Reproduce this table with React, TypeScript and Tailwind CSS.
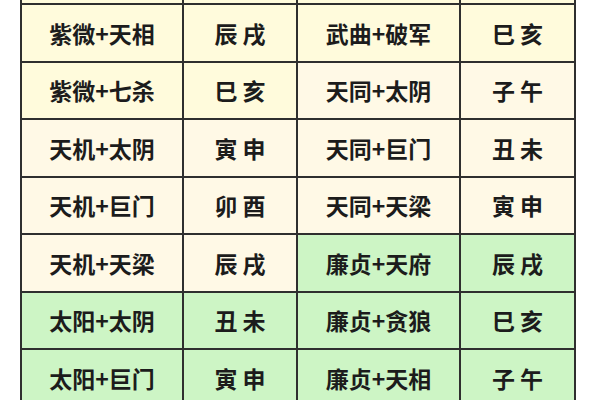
import React from "react";

type Row = { cells: [string, string, string, string]; bg: [string, string, string, string] };

const Y1 = "bg-[#fffbdc]";
const Y2 = "bg-[#fff9e6]";
const G = "bg-[#cdf5c5]";

const rows: Row[] = [
  { cells: ["紫微+天相", "辰 戌", "武曲+破军", "巳 亥"], bg: [Y1, Y1, Y1, Y1] },
  { cells: ["紫微+七杀", "巳 亥", "天同+太阴", "子 午"], bg: [Y1, Y1, Y2, Y2] },
  { cells: ["天机+太阴", "寅 申", "天同+巨门", "丑 未"], bg: [Y2, Y2, Y2, Y2] },
  { cells: ["天机+巨门", "卯 酉", "天同+天梁", "寅 申"], bg: [Y2, Y2, Y2, Y2] },
  { cells: ["天机+天梁", "辰 戌", "廉贞+天府", "辰 戌"], bg: [Y2, Y2, G, G] },
  { cells: ["太阳+太阴", "丑 未", "廉贞+贪狼", "巳 亥"], bg: [G, G, G, G] },
  { cells: ["太阳+巨门", "寅 申", "廉贞+天相", "子 午"], bg: [G, G, G, G] },
];

export default function App() {
  return (
    <div
      className="w-[600px] h-[400px] overflow-hidden bg-white pl-[20px]"
      style={{ fontFamily: '"Noto Sans CJK SC", "Noto Sans", sans-serif' }}
    >
      <div className="w-[556px]">
        <div className="grid grid-cols-[162px_114px_163px_115px] border-l-2 border-[#2f2f2f]">
          {[0, 1, 2, 3].map((j) => (
            <div key={j} className="h-[3px] bg-[#fffbdc] border-r-2 border-[#2f2f2f]" />
          ))}
        </div>
        <div className="grid grid-cols-[162px_114px_163px_115px] border-l-2 border-t-2 border-[#2f2f2f]">
          {rows.map((r, i) =>
            r.cells.map((c, j) => (
              <div
                key={`${i}-${j}`}
                className={`${r.bg[j]} h-[57.5px] border-r-2 border-b-2 border-[#2f2f2f] flex items-center justify-center text-[23px] font-bold text-[#1c1c1c] whitespace-pre`}
              >
                {c}
              </div>
            ))
          )}
        </div>
      </div>
    </div>
  );
}
